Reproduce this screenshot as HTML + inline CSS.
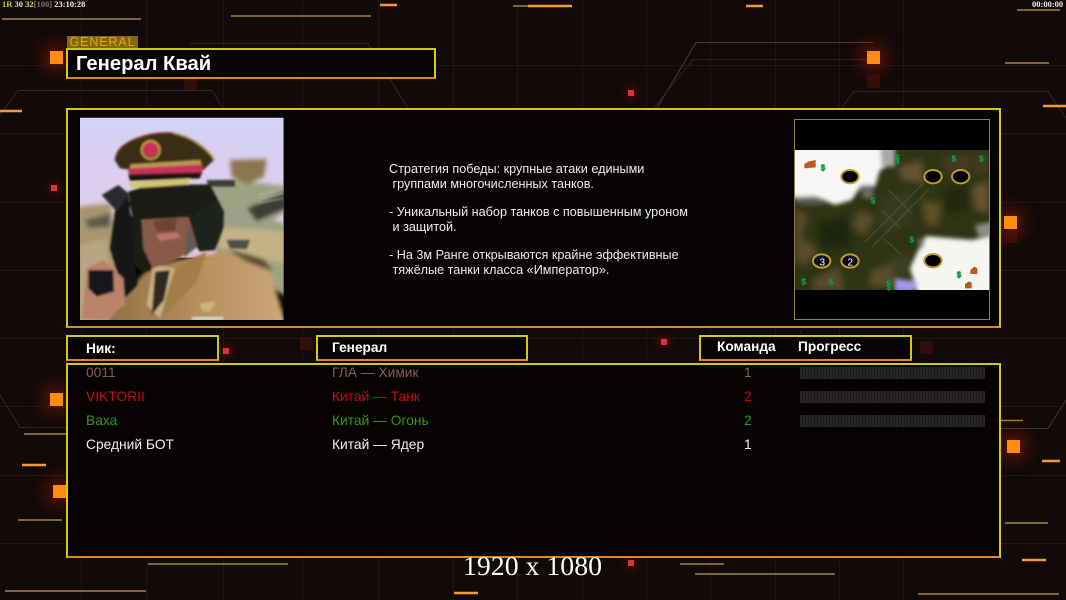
<!DOCTYPE html>
<html><head><meta charset="utf-8"><style>
html,body{margin:0;padding:0;background:#120a08}
#r{position:relative;width:1066px;height:600px;overflow:hidden;background:#120a08;font-family:"Liberation Sans",sans-serif}
#r>*{position:absolute}
.p{box-sizing:border-box;border:2px solid #cfcb14;border-bottom-color:#d98a1c;background:rgba(5,3,2,.93)}
.t{white-space:pre;line-height:16px;height:16px}
.s{background:#ff8c0c;width:13px;height:13px;box-shadow:0 0 16px 6px rgba(170,25,0,.5)}
.d{background:rgba(90,20,12,.45);width:13px;height:13px}
.r{background:#e0303a;width:6px;height:6px;box-shadow:0 0 8px 3px rgba(170,20,10,.3)}
.h{color:#fff;font-weight:bold;font-size:13.7px}
.w{color:#ececec;font-size:12.65px}
.c{font-size:13.8px}
.b{left:800px;width:185px;height:12px;background:repeating-linear-gradient(90deg,#262828 0 2px,#191a1a 2px 3px)}
</style></head><body><div id="r">
<svg style="left:0;top:0" width="1066" height="600" viewBox="0 0 1066 600" fill="none">
<g stroke="#21160f" stroke-width="1">
<path d="M81.5 0V600M146.5 0V600M223.5 0V600M302.5 0V600M378.5 0V600M453.5 0V600M517.5 0V600M582.5 0V600M646.5 0V600M710.5 0V600M775.5 0V600M839.5 0V600M903.5 0V600"/>
<path d="M0 65.5H1066M0 133.5H1066M0 202.5H1066M0 270.5H1066M0 338.5H1066M0 406.5H1066M0 475.5H1066M0 543.5H1066" stroke="#21160f"/>
</g>
<g stroke="#4a3f24" stroke-width="1">
<path d="M653 115 696 42.5H873"/><path d="M640 125 693 59.5H870" stroke="#2c2317"/>
<path d="M840 110 854 91.5H1048L1066 118" stroke="#33281c"/>
<path d="M190 43.5H368L412 115" stroke="#33281c"/>
<path d="M0 115 18 90.5H212L224 110" stroke="#33281c"/>
<path d="M0 395 20 427.5H66" stroke="#33281c"/>
<path d="M1066 400 1048 428.5H985" stroke="#44362a"/>
<path d="M190 503.5H368L400 390M700 503.5H872L830 380M190 471.5H368L428 350M700 471.5H870L800 330" stroke="#2b2018"/>
<path d="M305 108 240 250 305 330M760 108 800 250 760 330" stroke="#241913"/>
</g>
<g stroke-linecap="butt">
<g stroke="#a68444" stroke-width="1.5"><path d="M2 19H141M231 16H371M513 6H550M1017 10H1060M1005 63H1049M24 434H66M148 564H288M5 591H146M680 564H724M695 574H835M918 594H1059M1005 523H1048M18 520H62"/></g>
<g stroke="#f09a30" stroke-width="2.5"><path d="M380 5H397M528 6H572M746 6H763M1043 106H1066M0 111H22M22 465H46M1042 461H1060M454 593H478M1022 560H1046"/></g>
<path d="M985 420.5H1023" stroke="#a08020" stroke-width="1.5"/>
</g>
</svg>
<div class="s" style="left:50px;top:51px"></div>
<div class="d" style="left:184px;top:77px"></div>
<div class="s" style="left:867px;top:51px"></div>
<div class="d" style="left:867px;top:75px"></div>
<div class="s" style="left:1004px;top:216px"></div>
<div class="d" style="left:1004px;top:230px"></div>
<div class="s" style="left:50px;top:393px"></div>
<div class="s" style="left:1007px;top:440px"></div>
<div class="s" style="left:53px;top:485px"></div>
<div class="d" style="left:300px;top:337px"></div>
<div class="d" style="left:920px;top:341px"></div>
<div class="r" style="left:628px;top:90px"></div>
<div class="r" style="left:51px;top:185px"></div>
<div class="r" style="left:223px;top:348px"></div>
<div class="r" style="left:661px;top:339px"></div>
<div class="r" style="left:628px;top:560px"></div>

<div class="t" style="left:2px;top:-4px;font:bold 8.5px/16px 'Liberation Serif',serif;color:#eee"><span style="color:#b8d030">1R</span> <span style="color:#cfe0f0">30</span> <span style="color:#e8e050">32</span><span style="color:#777">[100]</span> 23:10:28</div>
<div class="t" style="left:1032px;top:-4px;font:bold 8.5px/16px 'Liberation Serif',serif;color:#eee">00:00:00</div>

<div class="t" style="left:67px;top:36px;width:71px;height:12px;background:#86660e;color:#dca624;font-size:12.5px;line-height:12px;letter-spacing:.9px;text-align:center">GENERAL</div>
<div class="p" style="left:66px;top:48px;width:370px;height:31px"></div>
<div class="t" style="left:76px;top:53px;color:#fff;font-weight:bold;font-size:20.2px;line-height:22px;height:22px">Генерал Квай</div>

<div class="p" style="left:66px;top:108px;width:935px;height:220px"></div>
<svg style="left:60px;top:105px" width="240" height="225" viewBox="0 0 720 675">
<defs>
<clipPath id="c"><rect x="60" y="38" width="611" height="607"/></clipPath>
<linearGradient id="g" x1="0" y1="0" x2="0" y2="1"><stop offset="0" stop-color="#d4d2f6"/><stop offset="1" stop-color="#e6c8e6"/></linearGradient>
<linearGradient id="u" x1="0" y1="0" x2="1" y2="0"><stop offset="0" stop-color="#8f7246"/><stop offset=".5" stop-color="#b58e5c"/><stop offset="1" stop-color="#cda878"/></linearGradient>
<filter id="f"><feGaussianBlur stdDeviation="6"/></filter>
<filter id="f2"><feGaussianBlur stdDeviation="3.5"/></filter>
</defs>
<g clip-path="url(#c)">
<rect x="60" y="38" width="611" height="420" fill="url(#g)"/>
<g filter="url(#f)">
<path d="M50 305 150 295 240 660H50Z" fill="#a89670"/>
<path d="M60 420 140 400 160 660H50Z" fill="#b8a682"/>
<path d="M75 345 150 325 150 365 85 370Z" fill="#5a5b4e"/>
<path d="M440 235 530 225 690 245V310L640 345 690 360V580L470 460Z" fill="#9ea284"/>
<path d="M470 365 690 380V480L480 430Z" fill="#c2b284"/>
<path d="M510 165 620 162 612 215 560 238 515 215Z" fill="#8c7650"/>
<path d="M560 310 680 255V310L590 350Z" fill="#3c3e38"/>
</g>
<g filter="url(#f2)">
<path d="M440 225H525V245H445Z" fill="#3a3f38"/>
<path d="M595 270 670 250M595 282 670 265M595 294 670 280" stroke="#b8b8a0" stroke-width="3" fill="none"/>
<path d="M500 405 570 405 560 432 510 430Z" fill="#4e5048"/>
</g>
<g filter="url(#f)">
<path d="M135 660 200 560 275 480 490 440 630 500 680 660Z" fill="url(#u)"/>
<path d="M500 432 610 465 640 500 560 470Z" fill="#5c4628"/>
</g>
<g filter="url(#f2)">
<path d="M280 480 345 490 300 640 260 600Z" fill="#c8b184"/>
<path d="M285 500 330 495 312 585 275 630Z" fill="#2e2a20"/>
<path d="M345 490 440 440 410 530 300 645 320 570Z" fill="#a27e4c"/>
<path d="M210 330 218 470 240 498 272 498 290 430 240 340Z" fill="#1c1e18"/>
<path d="M200 300 250 240 450 238 492 320 490 370 465 435 420 440 390 400Z" fill="#1f211c"/>
<path d="M245 345 385 335 412 425 340 470 278 490 250 430Z" fill="#8a5a48"/>
<path d="M280 350 350 340 345 378 290 380Z" fill="#6c4234"/>
<path d="M288 388 352 382 362 398 300 408Z" fill="#bc7466"/>
<path d="M385 360 412 425 372 458Z" fill="#5c5b54"/>
<path d="M205 260 250 245 440 245 470 280 400 335 240 345 215 330Z" fill="#1b1d19"/>
<path d="M164 165C170 110 270 75 340 85 400 95 450 140 462 165L430 195 215 195 180 190Z" fill="#3b2d12"/>
<path d="M170 150C180 110 270 78 340 85" stroke="#7c3026" stroke-width="5" fill="none"/>
<path d="M340 85C400 95 450 140 462 165" stroke="#a88a44" stroke-width="5" fill="none"/>
<path d="M212 178 420 165 428 188 208 195Z" fill="#b89a50"/>
<path d="M205 190 425 178 428 208 205 208Z" fill="#c8325a"/>
<path d="M205 208 425 202 420 220 210 228Z" fill="#16140c"/>
<path d="M205 232 390 220 385 238 215 250Z" fill="#d4c478"/>
<circle cx="272" cy="132" r="24" fill="#c83058"/><circle cx="272" cy="135" r="27" fill="none" stroke="#c8a840" stroke-width="5"/>
<path d="M175 240 205 265 232 540 195 578 150 430Z" fill="#121214"/>
<path d="M125 270 175 240 205 270 170 320Z" fill="#2c2c2e"/>
<path d="M65 640 80 490 130 465 190 520 195 600 130 645Z" fill="#bc8268"/>
<path d="M85 495 160 495 162 560 110 575 85 550Z" fill="#15151a"/>
<path d="M418 595 468 590 450 620 428 620Z" fill="#c8ba6c"/>
<path d="M395 636H490V645H395Z" fill="#ddd"/>
</g>
</g>
</svg>

<svg style="left:785px;top:110px" width="220" height="220" viewBox="0 0 660 660">
<defs>
<clipPath id="m"><rect x="30" y="120" width="582" height="420"/></clipPath>
<filter id="b1"><feGaussianBlur stdDeviation="10"/></filter>
<filter id="b2"><feGaussianBlur stdDeviation="6"/></filter>
</defs>
<rect x="28.500" y="28.500" width="585" height="600" fill="#000" stroke="#8e7e52" stroke-width="3"/>
<g clip-path="url(#m)">
<rect x="30" y="120" width="582" height="420" fill="#2e3414"/>
<g filter="url(#b1)">
<path d="M30 290 70 320 50 380 100 420 60 470 30 450Z" fill="#5a4c2c"/>
<path d="M220 300 270 320 240 380 200 350Z" fill="#5a4c2c"/>
<path d="M340 170 410 150 420 220 350 210Z" fill="#665230"/>
<path d="M410 270 470 280 460 350 420 340Z" fill="#5e4e28"/>
<path d="M560 230 612 210V310L570 300Z" fill="#665230"/>
<path d="M80 510 160 470 180 540H90Z" fill="#5a4c2c"/>
<path d="M260 480 320 460 340 530H250Z" fill="#5a4e2a"/>
<path d="M100 340 190 320 200 410 110 420Z" fill="#1e2610"/>
<path d="M480 240 550 230 550 300 480 310Z" fill="#202610"/>
<path d="M280 260 380 240 380 340 290 370Z" fill="#343a20"/>
<path d="M320 440 380 430 380 500 320 490Z" fill="#3a3f24"/>
<path d="M470 140 560 130 560 190 480 190Z" fill="#443a20"/>
<path d="M570 130 612 130V190L570 190Z" fill="#443a20"/>
</g>
<g filter="url(#b2)">
<path d="M15 105H325V160L285 180 270 230 230 225 200 270 150 285 90 260 15 262Z" fill="#f8f6f4"/>
<path d="M285 105H330V170L290 170Z" fill="#a8a8a4"/>
<path d="M30 262 90 262 120 285 60 285 30 280Z" fill="#5c5c58"/>
<path d="M225 225 265 225 265 265 235 265Z" fill="#6a6a68"/>
<path d="M420 378 560 390 630 375V555H400L375 475 395 430Z" fill="#f7f5f2"/>
<path d="M570 345 630 335V375L580 380Z" fill="#8c8c88"/>
<path d="M395 390 425 380 410 420Z" fill="#6f6f6c"/>
<path d="M330 505 400 515 385 545H330Z" fill="#a09ae8"/>
</g>
<g stroke="#585a40" stroke-width="5" fill="none" opacity=".5">
<path d="M240 395 415 220M262 410 430 240M290 300 345 355M310 240 380 310M295 385 345 430"/>
</g>
</g>
<g stroke="#c09c24" stroke-width="6" fill="#000">
<ellipse cx="195" cy="200" rx="26" ry="20"/><ellipse cx="444" cy="200" rx="26" ry="20"/><ellipse cx="527" cy="200" rx="26" ry="20"/><ellipse cx="444" cy="452" rx="26" ry="20"/><ellipse cx="110" cy="453" rx="26" ry="20" fill="#0c0c20"/><ellipse cx="195" cy="453" rx="26" ry="20" fill="#0c0c20"/>
</g>
<g fill="#fff" font-family="Liberation Sans,sans-serif" font-size="30" text-anchor="middle"><text x="112" y="466">3</text><text x="196" y="466">2</text></g>
<g fill="#22c050" font-family="Liberation Sans,sans-serif" font-weight="bold" font-size="24" text-anchor="middle" stroke="#0a8030" stroke-width="1.500">
<text x="114" y="182">$</text><text x="337" y="152">$</text><text x="337" y="160">$</text><text x="506" y="154">$</text><text x="589" y="154">$</text><text x="264" y="280">$</text><text x="380" y="398">$</text><text x="56" y="524">$</text><text x="138" y="524">$</text><text x="311" y="530">$</text><text x="311" y="540">$</text><text x="522" y="503">$</text></g>
<g fill="#c0581c"><path d="M58 175V162L70 155 92 150V172Z"/><path d="M556 492V480L568 470 577 475V492Z"/><path d="M540 535V522L552 514 560 518V535Z"/></g>
</svg>
<div class="t w" style="left:389px;top:161px">Стратегия победы: крупные атаки едиными</div>
<div class="t w" style="left:389px;top:176px"> группами многочисленных танков.</div>
<div class="t w" style="left:389px;top:204px">- Уникальный набор танков с повышенным уроном</div>
<div class="t w" style="left:389px;top:219px"> и защитой.</div>
<div class="t w" style="left:389px;top:247px">- На 3м Ранге открываются крайне эффективные</div>
<div class="t w" style="left:389px;top:262px"> тяжёлые танки класса «Император».</div>

<div class="p" style="left:66px;top:335px;width:153px;height:26px"></div>
<div class="p" style="left:316px;top:335px;width:212px;height:26px"></div>
<div class="p" style="left:699px;top:335px;width:213px;height:26px"></div>
<div class="t h" style="left:86px;top:341px">Ник:</div>
<div class="t h" style="left:332px;top:340px">Генерал</div>
<div class="t h" style="left:717px;top:339px">Команда</div>
<div class="t h" style="left:798px;top:339px">Прогресс</div>

<div class="p" style="left:66px;top:363px;width:935px;height:195px"></div>
<div class="t c" style="left:86px;top:365px;color:#8c5a5c">0011</div>
<div class="t c" style="left:332px;top:365px;color:#8c5a5c">ГЛА — Химик</div>
<div class="t c" style="left:744px;top:365px;color:#8c5a5c">1</div>
<div class="t c" style="left:86px;top:389px;color:#c80c0c">VIKTORII</div>
<div class="t c" style="left:332px;top:389px;color:#c80c0c">Китай — Танк</div>
<div class="t c" style="left:744px;top:389px;color:#c80c0c">2</div>
<div class="t c" style="left:86px;top:413px;color:#2f9a14">Ваха</div>
<div class="t c" style="left:332px;top:413px;color:#2f9a14">Китай — Огонь</div>
<div class="t c" style="left:744px;top:413px;color:#2f9a14">2</div>
<div class="t c" style="left:86px;top:437px;color:#f0f0f0">Средний БОТ</div>
<div class="t c" style="left:332px;top:437px;color:#f0f0f0">Китай — Ядер</div>
<div class="t c" style="left:744px;top:437px;color:#f0f0f0">1</div>
<div class="b" style="top:367px"></div>
<div class="b" style="top:391px"></div>
<div class="b" style="top:415px"></div>

<div class="t" style="left:463px;top:551px;height:32px;line-height:32px;color:#fff;font-family:'Liberation Serif',serif;font-size:27.8px">1920 x 1080</div>
</div></body></html>
